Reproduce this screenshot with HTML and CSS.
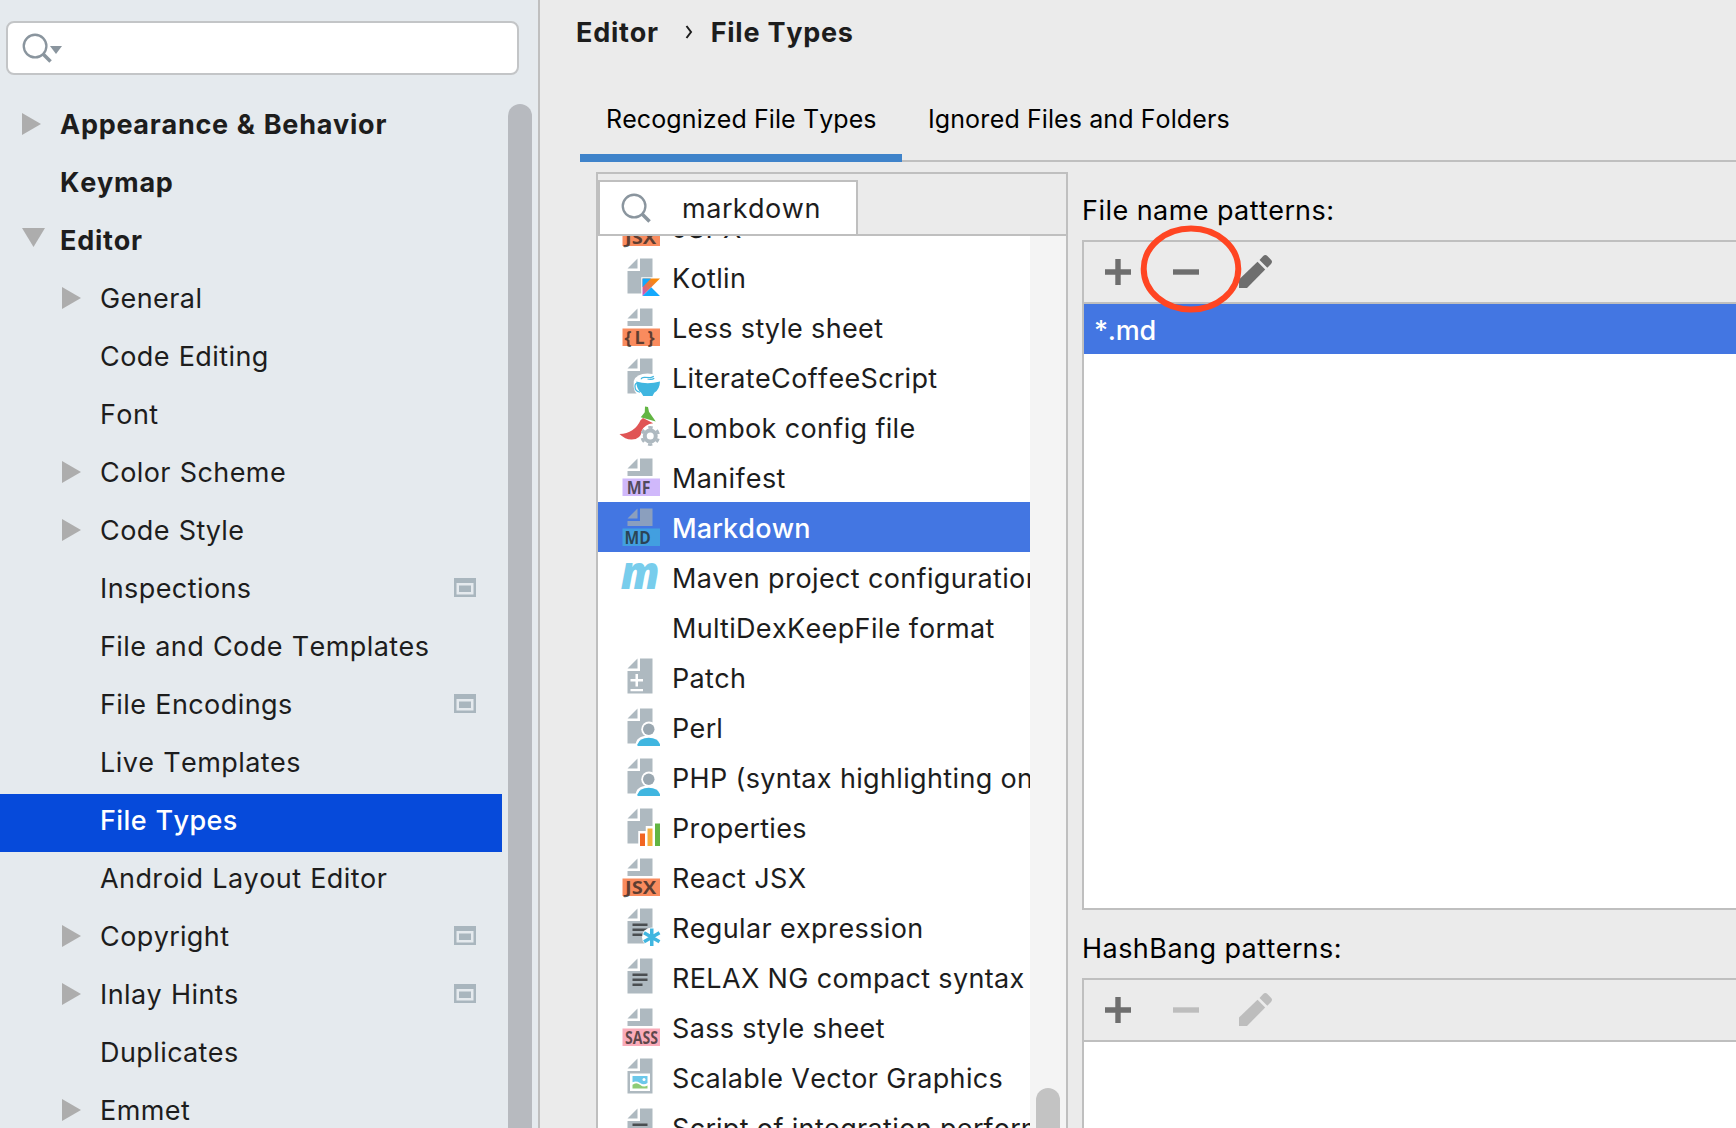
FILE: index.html
```html
<!DOCTYPE html>
<html lang="en">
<head>
<meta charset="utf-8">
<title>Settings - File Types</title>
<link rel="stylesheet" href="styles.css">
</head>
<body>
<svg class="defs" aria-hidden="true">
  <symbol id="page" viewBox="0 0 16 16"><path d="M7 1v4H3z"/><path d="M8 1v5H3v9h10V1z"/></symbol>
  <symbol id="page-top" viewBox="0 0 16 16"><path d="M7 1v4H3z"/><path d="M8 1v5H3v2h10V1z"/></symbol>
  <symbol id="lens" viewBox="0 0 32 32"><circle cx="13.5" cy="13.5" r="11.7" fill="none" stroke="#8a959e" stroke-width="2.4"/><path d="M21.5 21.5l8 8" stroke="#8a959e" stroke-width="3.6"/></symbol>
  <symbol id="project" viewBox="0 0 22 19"><path fill-rule="evenodd" d="M0 0h22v19H0zM2.5 5v11.5h17V5z"/><path d="M5 7.500h12v6.500H5z"/></symbol>
  <symbol id="right" viewBox="0 0 19 22"><path d="M0 0l19 11L0 22z"/></symbol>
  <symbol id="down" viewBox="0 0 23 19"><path d="M0 0h23L11.500 19z"/></symbol>
  <symbol id="plus" viewBox="0 0 26 26"><path d="M10.300 0h5.400v10.300H26v5.400H15.700V26h-5.400V15.700H0v-5.400h10.300z"/></symbol>
  <symbol id="minus" viewBox="0 0 26 26"><path d="M0 10.300h26v5.400H0z"/></symbol>
  <symbol id="pencil" viewBox="0 0 33 33"><path d="M0 24.500L18.500 6.800l7.700 7.700L8 33H0z"/><path d="M20.500 5l3.700-3.900q2.100-2 4.200 0l3.600 3.600q2 2 0 4.200l-3.700 3.800z"/></symbol>
  <symbol id="user" viewBox="0 0 16 16"><path class="pg" d="M7 1v4H3zM8 1v5H3v9h10V1z"/><circle cx="11.600" cy="9.300" r="3.100" fill="#fff"/><path d="M6.200 16q0-4.200 5.400-4.200t5.400 4.200z" fill="#fff"/><circle cx="11.500" cy="9.300" r="2.300" fill="#9aa7b0"/><path d="M7 16v-.7q.8-2.600 4.500-2.600T16 15.300v.7z" fill="#40b6e0"/></symbol>
  <linearGradient id="kt" x1="0" y1="1" x2="1" y2="0"><stop offset="0.1" stop-color="#c757bc"/><stop offset=".45" stop-color="#e8744d"/><stop offset=".8" stop-color="#f98909"/></linearGradient>
</svg>
<div class="window">
  <aside class="sidebar">
    <div class="search"><svg class="lens"><use href="#lens"/></svg><svg class="drop" viewBox="0 0 12 8"><path d="M0 0h12L6 8z" fill="#8a959e"/></svg></div>
    <div class="tree-area">
      <ul class="tree">
        <li class="top"><svg class="arrow"><use href="#right"/></svg><span>Appearance &amp; Behavior</span></li>
        <li class="top"><i class="arrow"></i><span>Keymap</span></li>
        <li class="top"><svg class="arrow open"><use href="#down"/></svg><span>Editor</span></li>
        <li><svg class="arrow"><use href="#right"/></svg><span>General</span></li>
        <li><i class="arrow"></i><span>Code Editing</span></li>
        <li><i class="arrow"></i><span>Font</span></li>
        <li><svg class="arrow"><use href="#right"/></svg><span>Color Scheme</span></li>
        <li><svg class="arrow"><use href="#right"/></svg><span>Code Style</span></li>
        <li><i class="arrow"></i><span>Inspections</span><svg class="project"><use href="#project"/></svg></li>
        <li><i class="arrow"></i><span>File and Code Templates</span></li>
        <li><i class="arrow"></i><span>File Encodings</span><svg class="project"><use href="#project"/></svg></li>
        <li><i class="arrow"></i><span>Live Templates</span></li>
        <li class="selected"><i class="arrow"></i><span>File Types</span></li>
        <li><i class="arrow"></i><span>Android Layout Editor</span></li>
        <li><svg class="arrow"><use href="#right"/></svg><span>Copyright</span><svg class="project"><use href="#project"/></svg></li>
        <li><svg class="arrow"><use href="#right"/></svg><span>Inlay Hints</span><svg class="project"><use href="#project"/></svg></li>
        <li><i class="arrow"></i><span>Duplicates</span></li>
        <li><svg class="arrow"><use href="#right"/></svg><span>Emmet</span></li>
      </ul>
      <div class="tree-thumb"></div>
    </div>
  </aside>
  <main class="content">
    <div class="crumbs"><span>Editor</span><svg class="chev" viewBox="0 0 8 14"><path d="M1.500 1l4.500 6-4.500 6" fill="none" stroke="#1d1d1d" stroke-width="2"/></svg><span>File Types</span></div>
    <div class="tabs"><div class="tab active">Recognized File Types</div><div class="tab">Ignored Files and Folders</div></div>
    <div class="panes">
      <section class="types">
        <div class="types-head"><div class="filter"><svg class="lens"><use href="#lens"/></svg><span>markdown</span></div></div>
        <div class="types-body">
          <ul class="list">
            <li><svg class="ic" viewBox="0 0 16 16"><use href="#page-top"/><path d="M1 9h15v7H1z" fill="#f98b5e"/><text x="2" y="15" textLength="12.500" lengthAdjust="spacingAndGlyphs">JSX</text></svg><span>JSPX</span></li>
            <li><svg class="ic" viewBox="0 0 16 16"><path d="M7 1v4H3zM8 1v5H3v9h5.500V8.500H13V1z"/><path d="M9 9h7l-7 7z" fill="url(#kt)"/><path d="M9 9h3.400L9 12.500zM9 16l3.500-3.500L16 16z" fill="#14a9fd"/></svg><span>Kotlin</span></li>
            <li><svg class="ic" viewBox="0 0 16 16"><use href="#page-top"/><path d="M1 9h15v7H1z" fill="#f98b5e"/><text x="1.800" y="15" textLength="12">{L}</text></svg><span>Less style sheet</span></li>
            <li><svg class="ic" viewBox="0 0 16 16"><use href="#page"/><path d="M5.500 10q1-3 5.500-3t5.500 2.500l-1 6.500H8q-3-1-2.500-6z" fill="#fff"/><path d="M6.500 10.200q4.500 1.300 9.500 0-.1 3.300-2.300 4.500L13 16H9.300l-.8-1.300q-1.900-1.200-2-4.500z" fill="#40b6e0"/><path d="M7 11q-1-.3-1 1.200 0 1.900 2 2.300M8.500 9.300q0-.8 1.300-.8t2 .1q1 .1 1.700-.5M11 9.200q1.800.4 2.700-.3" fill="none" stroke="#40b6e0" stroke-width=".5"/></svg><span>LiterateCoffeeScript</span></li>
            <li><svg class="ic" viewBox="0 0 16 16"><path d="M-.2 11.200q6-.2 8.400-5.500l1-.9 4.100 2.100q-3.500.4-4.600 3-.4 3.500-4 3.500Q2.200 13.500-.2 11.200z" fill="#e05555"/><path d="M10 .2l1.200.2.4 1.900 2.700 3.900-6-1.700 1.600-2z" fill="#62b543"/><circle cx="12.100" cy="12" r="2.200" fill="none" stroke="#aeb9c0" stroke-width="1.600"/><circle cx="12.100" cy="12" r="3.400" fill="none" stroke="#aeb9c0" stroke-width="1.100" stroke-dasharray="1.700 1.860" stroke-dashoffset=".85" transform="rotate(30 12.100 12)"/></svg><span>Lombok config file</span></li>
            <li><svg class="ic" viewBox="0 0 16 16"><use href="#page-top"/><path d="M1 9h15v7H1z" fill="#d0b8fb"/><text x="2.700" y="15" textLength="9.500" lengthAdjust="spacingAndGlyphs">MF</text></svg><span>Manifest</span></li>
            <li class="selected"><svg class="ic" viewBox="0 0 16 16"><use href="#page-top"/><path d="M1 9h15v7H1z" fill="#429fe0"/><text x="1.800" y="15" textLength="10.500" lengthAdjust="spacingAndGlyphs">MD</text></svg><span>Markdown</span></li>
            <li><svg class="ic" viewBox="0 0 16 16"><text class="maven" x="0.300" y="13" textLength="15.500" lengthAdjust="spacingAndGlyphs">m</text></svg><span>Maven project configuration</span></li>
            <li><i class="ic"></i><span>MultiDexKeepFile format</span></li>
            <li><svg class="ic" viewBox="0 0 16 16"><use href="#page"/><path d="M6.200 7.200h1v2h2v1h-2v2h-1v-2h-2v-1h2zM4.200 13.200h5v.9h-5z" fill="#fff"/></svg><span>Patch</span></li>
            <li><svg class="ic"><use href="#user"/></svg><span>Perl</span></li>
            <li><svg class="ic"><use href="#user"/></svg><span>PHP (syntax highlighting only)</span></li>
            <li><svg class="ic" viewBox="0 0 16 16"><path d="M7 1v4H3zM8 1v5H3v9h4.300v-5h3V8H13V1z"/><path d="M8 11h2v5H8z" fill="#f26522"/><path d="M11 9h2v7h-2z" fill="#f4af3d"/><path d="M14 7h2v9h-2z" fill="#62b543"/></svg><span>Properties</span></li>
            <li><svg class="ic" viewBox="0 0 16 16"><use href="#page-top"/><path d="M1 9h15v7H1z" fill="#f98b5e"/><text x="2" y="15" textLength="12.500" lengthAdjust="spacingAndGlyphs">JSX</text></svg><span>React JSX</span></li>
            <li><svg class="ic" viewBox="0 0 16 16"><use href="#page"/><path d="M5 7h6v1H5zM5 9h6v1H5zM5 11h4v1H5z" fill="#4a4e51"/><circle cx="12.700" cy="12.500" r="3.900" fill="#fff"/><path d="M12.700 9v7M9.600 10.700l6.200 3.600M9.600 14.300l6.200-3.600" stroke="#40b6e0" stroke-width="1.400"/></svg><span>Regular expression</span></li>
            <li><svg class="ic" viewBox="0 0 16 16"><use href="#page"/><path d="M5 7h6v1H5zM5 9h6v1H5zM5 11h4v1H5z" fill="#4a4e51"/></svg><span>RELAX NG compact syntax</span></li>
            <li><svg class="ic" viewBox="0 0 16 16"><use href="#page-top"/><path d="M1 9h15v7H1z" fill="#faabb9"/><text x="2" y="15" textLength="13.200" lengthAdjust="spacingAndGlyphs">SASS</text></svg><span>Sass style sheet</span></li>
            <li><svg class="ic" viewBox="0 0 16 16"><use href="#page"/><path d="M4 7h8v7H4z" fill="#fff"/><path d="M5 8h6v2.800q-1.500 1-3 0T5 10.500z" fill="#6cc8ea"/><circle cx="9.600" cy="9.400" r=".6" fill="#fff"/><path d="M5 11.500q1.500-1.300 3 0t3 .3V13H5z" fill="#8fcb76"/></svg><span>Scalable Vector Graphics</span></li>
            <li><svg class="ic" viewBox="0 0 16 16"><use href="#page"/><path d="M5 7h6v1H5zM5 9h6v1H5zM5 11h4v1H5z" fill="#4a4e51"/></svg><span>Script of integration performance</span></li>
          </ul>
          <div class="track"><div class="thumb"></div></div>
        </div>
      </section>
      <section class="patterns">
        <h2>File name patterns:</h2>
        <div class="box names">
          <div class="toolbar"><svg class="tb"><use href="#plus"/></svg><svg class="tb"><use href="#minus"/></svg><svg class="tb pen"><use href="#pencil"/></svg>
            <svg class="ring" viewBox="0 0 102 88"><ellipse cx="51" cy="44" rx="47.300" ry="40.500" fill="none" stroke="#ff4522" stroke-width="6"/></svg></div>
          <div class="entry">*.md</div>
        </div>
        <h2>HashBang patterns:</h2>
        <div class="box hash">
          <div class="toolbar"><svg class="tb"><use href="#plus"/></svg><svg class="tb off"><use href="#minus"/></svg><svg class="tb pen off"><use href="#pencil"/></svg></div>
        </div>
      </section>
    </div>
  </main>
</div>
</body>
</html>
```
FILE: styles.css
```css
* { box-sizing: border-box; }
body { margin: 0; font-family: Inter, "Liberation Sans", sans-serif; font-size: 27px; font-kerning: none; letter-spacing: .35px; color: #1d1d1d; }
ul { list-style: none; margin: 0; padding: 0; }
svg { display: block; flex: none; }
.defs { position: absolute; width: 0; height: 0; }
.window { display: flex; width: 1736px; height: 1128px; overflow: hidden; background: #ebebeb; }

.sidebar { width: 540px; flex: none; background: #e5eaee; border-right: 2px solid #bfbfbf; padding-top: 21px; }
.search { width: 513px; height: 54px; margin-left: 6px; background: #fff; border: 2px solid #c3c5c7; border-radius: 8px; display: flex; padding: 10px 0 0 14px; }
.lens { width: 31px; height: 31px; }
.drop { width: 12px; height: 8px; margin: 13px 0 0 -3px; }
.tree-area { display: flex; justify-content: space-between; padding: 23px 6px 0 0; height: 1053px; }
.tree { width: 502px; letter-spacing: .42px; word-spacing: .8px; }
.tree li { height: 58px; display: flex; align-items: center; padding: 0 26px 6px 62px; white-space: nowrap; }
.tree li.top { padding-left: 22px; font-weight: 700; letter-spacing: .75px; }
.arrow { width: 19px; height: 22px; margin-right: 19px; fill: #adadad; flex: none; }
.arrow.open { width: 23px; height: 19px; margin: -5px 15px 0 0; }
.tree li.selected { background: #064ada; color: #fff; font-weight: 500; }
.project { width: 22px; height: 19px; margin: -1px 0 0 auto; fill: #a9b6be; }
.tree-thumb { width: 24px; margin-top: 6px; background: #b7babf; border-radius: 12px 12px 0 0; }

.content { flex: 1; min-width: 0; display: flex; flex-direction: column; }
.crumbs { height: 96px; padding: 16px 0 0 36px; display: flex; align-items: flex-start; font-weight: 700; letter-spacing: .75px; line-height: 34px; white-space: nowrap; }
.chev { width: 8px; height: 14px; margin: 9px 18px 0 26px; }
.tabs { height: 66px; margin-left: 40px; display: flex; border-bottom: 2px solid #bfbfbf; color: #000; font-size: 25px; letter-spacing: .1px; line-height: 46px; white-space: nowrap; }
.tab { height: 66px; padding: 0 26px; }
.tab.active { width: 322px; border-bottom: 8px solid #3f83ca; }
.panes { flex: 1; min-height: 0; display: flex; gap: 14px; padding: 10px 0 0 56px; }

.types { width: 472px; flex: none; border: 2px solid #bfbfbf; border-bottom: 0; display: flex; flex-direction: column; }
.types-head { height: 62px; flex: none; padding-top: 6px; border-bottom: 2px solid #bfbfbf; }
.filter { width: 260px; height: 54px; border: 2px solid #bfbfbf; border-bottom: 0; background: #fff; display: flex; align-items: center; padding: 1px 0 0 21px; }
.filter span { margin-left: 30px; letter-spacing: .55px; }
.types-body { flex: 1; min-height: 0; display: flex; overflow: hidden; background: #fff; }
.list { width: 432px; margin-top: -34px; overflow: hidden; flex: none; }
.list li { height: 50px; display: flex; align-items: center; padding-left: 22px; white-space: nowrap; }
.list li.selected { background: #4376e2; color: #fff; font-weight: 500; letter-spacing: .2px; }
.list li.selected .ic { fill: #8b9fbe; }
.list span { padding: 2px 0 0 12px; }
.ic { width: 40px; height: 40px; margin-top: -2px; fill: #aeb9c0; flex: none; overflow: visible; }
.pg { fill: #aeb9c0; }
.ic text { font-family: "Open Sans", sans-serif; font-weight: 700; font-size: 7.200px; letter-spacing: 0; fill: #231f20; fill-opacity: .72; }
.ic .maven { font-size: 18.500px; font-style: italic; font-weight: 800; fill: #78cdec; fill-opacity: 1; }
.track { width: 36px; background: #f4f4f4; padding: 852px 6px 0; }
.thumb { height: 60px; background: #c3c3c3; border-radius: 12px 12px 0 0; }

.patterns { flex: 1; min-width: 0; }
h2 { margin: 0; height: 68px; padding-top: 22px; font-size: 27px; line-height: 34px; font-weight: 400; letter-spacing: .46px; color: #000; }
.box { border: 2px solid #bfbfbf; border-right: 0; background: #fff; }
.names { height: 670px; }
.hash { height: 200px; }
.toolbar { position: relative; height: 62px; background: #ebebeb; border-bottom: 2px solid #bfbfbf; display: flex; align-items: center; gap: 42px; padding-left: 21px; fill: #6e6e6e; }
.tb { width: 26px; height: 26px; }
.tb.pen { width: 33px; height: 33px; margin: -2px 0 0 -2px; }
.off { fill: #bdbdbd; }
.ring { position: absolute; left: 56px; top: -17px; width: 102px; height: 88px; z-index: 2; }
.entry { height: 50px; padding-left: 10px; line-height: 53px; background: #4376e2; color: #fff; font-weight: 500; letter-spacing: -.2px; }
```
